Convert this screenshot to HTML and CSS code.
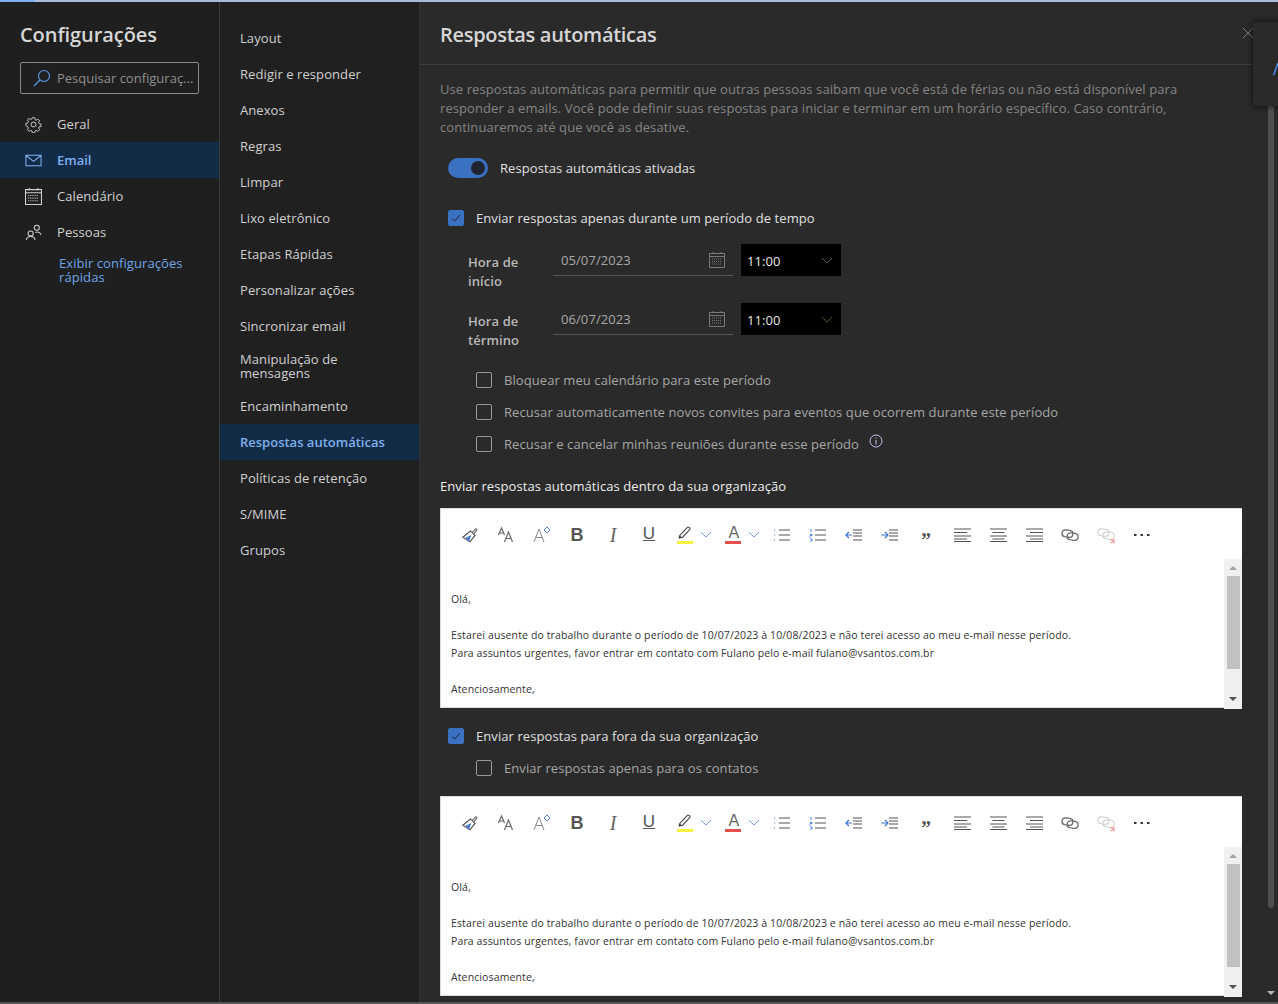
FILE: index.html
```html
<!DOCTYPE html>
<html lang="pt-BR">
<head>
<meta charset="utf-8">
<title>Configurações</title>
<link rel="stylesheet" href="styles.css">
</head>
<body>
<svg class="defs" width="0" height="0" aria-hidden="true">
  <defs>
    <symbol id="i-brush" viewBox="0 0 20 20"><path d="M12 8l4-4.500c.8-.9 2.200.4 1.400 1.300L13.500 9.500" fill="none" stroke="#666" stroke-width="1.200"/><path d="M10.500 5.500l5 5-5.500 7L2 12.500z" fill="#fff" stroke="#555" stroke-width="1.300"/><path d="M5 13l6.500-3-2 6-1.500 1z" fill="#4a7fd0"/></symbol>
    <symbol id="i-size" viewBox="0 0 18 18"><path d="M1.500 9L4.500 2l3 7M2.500 7h4M7.500 16l4-10 4 10M9 12.500h5" fill="none" stroke="#666" stroke-width="1.200"/></symbol>
    <symbol id="i-grow" viewBox="0 0 18 18"><path d="M1 16L6 3l5 13M2.800 11.500h6.400" fill="none" stroke="#888" stroke-width="1"/><path d="M14 1l3 3-3 3-3-3z" fill="none" stroke="#4a7fd0" stroke-width="1"/></symbol>
    <symbol id="i-hl" viewBox="0 0 18 18"><path d="M3 12L12 2.500c1-.9 3.500 1.200 2.500 2.300L6 14l-3.500.5z" fill="#fff" stroke="#444" stroke-width="1.200"/><path d="M2 15l1-3 3 2z" fill="#333"/></symbol>
    <symbol id="i-chev" viewBox="0 0 14 8"><path d="M1 1l6 6 6-6" fill="none" stroke="#5a8ad8" stroke-width="1"/></symbol>
    <symbol id="i-ul" viewBox="0 0 18 14"><path d="M6 2h11M6 7h11M6 12h11" stroke="#555" stroke-width="1.200"/><path d="M1 2h2M1 7h2M1 12h2" stroke="#4a7fd0" stroke-width="1.200" stroke-dasharray="1 1"/></symbol>
    <symbol id="i-ol" viewBox="0 0 18 14"><path d="M6 2h11M6 7h11M6 12h11" stroke="#555" stroke-width="1.200"/><path d="M2 1v3M1 6.500h2v1H1v2M1 11h2v2H1" fill="none" stroke="#5a8ad8" stroke-width="1"/></symbol>
    <symbol id="i-out" viewBox="0 0 18 14"><path d="M8 2h9M8 5h9M8 8h9M8 12h9" stroke="#555" stroke-width="1.100"/><path d="M1 7h6M4 4L1 7l3 3" fill="none" stroke="#3f74d0" stroke-width="1.200"/></symbol>
    <symbol id="i-in" viewBox="0 0 18 14"><path d="M8 2h9M8 5h9M8 8h9M8 12h9" stroke="#555" stroke-width="1.100"/><path d="M0 7h6M4 4l3 3-3 3" fill="none" stroke="#3f74d0" stroke-width="1.200"/></symbol>
    <symbol id="i-al" viewBox="0 0 18 14"><path d="M0 1h17M0 4.500h13M0 8h17M0 11h13M0 13.500h17" stroke="#555" stroke-width="1"/></symbol>
    <symbol id="i-ac" viewBox="0 0 18 14"><path d="M0 1h17M2.500 4.500h12M0 8h17M2.500 11h12M0 13.500h17" stroke="#555" stroke-width="1"/></symbol>
    <symbol id="i-ar" viewBox="0 0 18 14"><path d="M0 1h17M4 4.500h13M0 8h17M4 11h13M0 13.500h17" stroke="#555" stroke-width="1"/></symbol>
    <symbol id="i-link" viewBox="0 0 18 12"><rect x="1" y="1" width="11" height="7" rx="3.500" fill="none" stroke="currentColor" stroke-width="1.200" transform="rotate(8 6 4)"/><rect x="6" y="4" width="11" height="7" rx="3.500" fill="none" stroke="currentColor" stroke-width="1.200" transform="rotate(8 11 8)"/></symbol>
    <symbol id="i-more" viewBox="0 0 18 4"><path d="M1 1h2.500v2H1zM7.500 1H10v2H7.500zM14 1h2.500v2H14z" fill="#333"/></symbol>
    <symbol id="i-cal" viewBox="0 0 16 16"><path d="M.5 1.500h15v14H.5zM.5 4.500h15" fill="none" stroke="currentColor"/><path d="M4 0v2M12 0v2" stroke="currentColor"/><path d="M3 7h10M3 9.500h10M3 12h10" stroke="currentColor" stroke-dasharray="1 1"/></symbol>
    <symbol id="i-check" viewBox="0 0 16 16"><path d="M3.500 8.500l3 3 6-7" fill="none" stroke="currentColor" stroke-width="1.100"/></symbol>
  </defs>
</svg>
<div class="topbar"><div class="topbar-accent"></div></div>
<div class="app">
  <nav class="side">
    <h1 class="side-title">Configurações</h1>
    <div class="search">
      <svg class="search-icon" viewBox="0 0 18 18"><circle cx="11" cy="7" r="5.500" fill="none" stroke="currentColor" stroke-width="1.100"/><path d="M7 11l-6 6" stroke="currentColor" stroke-width="1.100"/></svg>
      <span>Pesquisar configuraç...</span>
    </div>
    <ul class="side-list">
      <li class="side-item"><svg class="side-icon" viewBox="0 0 18 18"><circle cx="9" cy="9" r="2.600" fill="none" stroke="currentColor"/><path d="M7.600 1h2.800l.4 2.200 1.500.7 1.900-1.200 2 2-1.200 1.900.7 1.500 2.200.4v2.800l-2.200.4-.7 1.500 1.200 1.900-2 2-1.900-1.200-1.500.7-.4 2.200H7.600l-.4-2.200-1.500-.7-1.900 1.200-2-2 1.200-1.900-.7-1.500L.1 10.400V7.600l2.200-.4.700-1.500L1.800 3.800l2-2 1.900 1.200 1.500-.7z" transform="translate(.9 .9) scale(.9)" fill="none" stroke="currentColor" stroke-width="1.100"/></svg>Geral</li>
      <li class="side-item side-item-active"><svg class="side-icon" viewBox="0 0 18 18"><path d="M1 3.500h16v11H1zM1.500 4L9 10l7.500-6" fill="none" stroke="currentColor" stroke-width="1.100"/></svg>Email</li>
      <li class="side-item"><svg class="side-icon" viewBox="0 0 16 16"><use href="#i-cal"/></svg>Calendário</li>
      <li class="side-item"><svg class="side-icon" viewBox="0 0 18 18"><circle cx="6" cy="10" r="2.700" fill="none" stroke="currentColor" stroke-width="1.100"/><path d="M1.500 17c0-5 9-5 9 0" fill="none" stroke="currentColor" stroke-width="1.100"/><circle cx="12.500" cy="4" r="2.700" fill="none" stroke="currentColor" stroke-width="1.100"/><path d="M11 9c2-1 5-.5 6 2.500" fill="none" stroke="currentColor" stroke-width="1.100"/></svg>Pessoas</li>
    </ul>
    <a class="quick-link">Exibir configurações rápidas</a>
  </nav>

  <nav class="sub">
    <div class="sub-item">Layout</div>
    <div class="sub-item">Redigir e responder</div>
    <div class="sub-item">Anexos</div>
    <div class="sub-item">Regras</div>
    <div class="sub-item">Limpar</div>
    <div class="sub-item">Lixo eletrônico</div>
    <div class="sub-item">Etapas Rápidas</div>
    <div class="sub-item">Personalizar ações</div>
    <div class="sub-item">Sincronizar email</div>
    <div class="sub-item sub-item-two">Manipulação de mensagens</div>
    <div class="sub-item">Encaminhamento</div>
    <div class="sub-item sub-item-active">Respostas automáticas</div>
    <div class="sub-item">Políticas de retenção</div>
    <div class="sub-item">S/MIME</div>
    <div class="sub-item">Grupos</div>
  </nav>

  <main class="main">
    <header class="main-head"><h2 class="main-title">Respostas automáticas</h2></header>
    <div class="content">
      <p class="intro">Use respostas automáticas para permitir que outras pessoas saibam que você está de férias ou não está disponível para responder a emails. Você pode definir suas respostas para iniciar e terminar em um horário específico. Caso contrário, continuaremos até que você as desative.</p>

      <div class="toggle-row">
        <span class="toggle"><span class="toggle-knob"></span></span>
        <span>Respostas automáticas ativadas</span>
      </div>

      <div class="check-row check-row-period">
        <span class="box box-on"><svg viewBox="0 0 16 16"><use href="#i-check"/></svg></span>
        <span>Enviar respostas apenas durante um período de tempo</span>
      </div>

      <div class="time-row time-row-first">
        <div class="time-label">Hora de início</div>
        <div class="date-field"><span>05/07/2023</span><svg class="cal" viewBox="0 0 16 16"><use href="#i-cal"/></svg></div>
        <div class="time-field"><span>11:00</span><svg class="time-chev" viewBox="0 0 14 8"><path d="M1 1l6 6 6-6" fill="none" stroke="currentColor"/></svg></div>
      </div>
      <div class="time-row">
        <div class="time-label">Hora de término</div>
        <div class="date-field"><span>06/07/2023</span><svg class="cal" viewBox="0 0 16 16"><use href="#i-cal"/></svg></div>
        <div class="time-field"><span>11:00</span><svg class="time-chev time-chev-warm" viewBox="0 0 14 8"><path d="M1 1l6 6 6-6" fill="none" stroke="currentColor"/></svg></div>
      </div>

      <div class="sub-checks">
        <div class="check-row"><span class="box"></span><span class="dim">Bloquear meu calendário para este período</span></div>
        <div class="check-row"><span class="box"></span><span class="dim">Recusar automaticamente novos convites para eventos que ocorrem durante este período</span></div>
        <div class="check-row"><span class="box"></span><span class="dim">Recusar e cancelar minhas reuniões durante esse período</span>
          <svg class="info" viewBox="0 0 14 14"><circle cx="7" cy="7" r="6" fill="none" stroke="currentColor"/><path d="M7 6v4.500M7 3.500v1.200" stroke="currentColor"/></svg>
        </div>
      </div>

      <div class="section-label">Enviar respostas automáticas dentro da sua organização</div>

      <section class="editor">
        <div class="toolbar">
          <svg class="t t-brush"><use href="#i-brush"/></svg>
          <svg class="t"><use href="#i-size"/></svg>
          <svg class="t t-grow"><use href="#i-grow"/></svg>
          <span class="t t-b">B</span>
          <span class="t t-i">I</span>
          <span class="t t-u">U</span>
          <span class="t t-color"><svg class="t-glyph"><use href="#i-hl"/></svg><span class="bar bar-yellow"></span></span>
          <svg class="t-chev"><use href="#i-chev"/></svg>
          <span class="t t-color t-color-a"><span class="t-a">A</span><span class="bar bar-red"></span></span>
          <svg class="t-chev"><use href="#i-chev"/></svg>
          <svg class="t t-l"><use href="#i-ul"/></svg>
          <svg class="t t-l"><use href="#i-ol"/></svg>
          <svg class="t t-l"><use href="#i-out"/></svg>
          <svg class="t t-l"><use href="#i-in"/></svg>
          <span class="t t-q">”</span>
          <svg class="t t-l"><use href="#i-al"/></svg>
          <svg class="t t-l"><use href="#i-ac"/></svg>
          <svg class="t t-l t-ar"><use href="#i-ar"/></svg>
          <svg class="t t-link"><use href="#i-link"/></svg>
          <span class="t t-unlink"><svg class="t-link t-link-off"><use href="#i-link"/></svg><span class="x">×</span></span>
          <svg class="t t-more"><use href="#i-more"/></svg>
        </div>
        <div class="body-wrap">
          <div class="body-text">
            <p>Olá,</p><p>&nbsp;</p>
            <p>Estarei ausente do trabalho durante o período de 10/07/2023 à 10/08/2023 e não terei acesso ao meu e-mail nesse período.</p>
            <p>Para assuntos urgentes, favor entrar em contato com Fulano pelo e-mail fulano@vsantos.com.br</p>
            <p>&nbsp;</p><p>Atenciosamente,</p>
          </div>
          <div class="scroll"><span class="arrow-up"></span><span class="thumb thumb-short"></span><span class="arrow-down"></span></div>
        </div>
      </section>

      <div class="check-row check-row-out">
        <span class="box box-on"><svg viewBox="0 0 16 16"><use href="#i-check"/></svg></span>
        <span>Enviar respostas para fora da sua organização</span>
      </div>
      <div class="sub-checks sub-checks-out">
        <div class="check-row"><span class="box"></span><span class="dim">Enviar respostas apenas para os contatos</span></div>
      </div>

      <section class="editor">
        <div class="toolbar">
          <svg class="t t-brush"><use href="#i-brush"/></svg>
          <svg class="t"><use href="#i-size"/></svg>
          <svg class="t t-grow"><use href="#i-grow"/></svg>
          <span class="t t-b">B</span>
          <span class="t t-i">I</span>
          <span class="t t-u">U</span>
          <span class="t t-color"><svg class="t-glyph"><use href="#i-hl"/></svg><span class="bar bar-yellow"></span></span>
          <svg class="t-chev"><use href="#i-chev"/></svg>
          <span class="t t-color t-color-a"><span class="t-a">A</span><span class="bar bar-red"></span></span>
          <svg class="t-chev"><use href="#i-chev"/></svg>
          <svg class="t t-l"><use href="#i-ul"/></svg>
          <svg class="t t-l"><use href="#i-ol"/></svg>
          <svg class="t t-l"><use href="#i-out"/></svg>
          <svg class="t t-l"><use href="#i-in"/></svg>
          <span class="t t-q">”</span>
          <svg class="t t-l"><use href="#i-al"/></svg>
          <svg class="t t-l"><use href="#i-ac"/></svg>
          <svg class="t t-l t-ar"><use href="#i-ar"/></svg>
          <svg class="t t-link"><use href="#i-link"/></svg>
          <span class="t t-unlink"><svg class="t-link t-link-off"><use href="#i-link"/></svg><span class="x">×</span></span>
          <svg class="t t-more"><use href="#i-more"/></svg>
        </div>
        <div class="body-wrap">
          <div class="body-text">
            <p>Olá,</p><p>&nbsp;</p>
            <p>Estarei ausente do trabalho durante o período de 10/07/2023 à 10/08/2023 e não terei acesso ao meu e-mail nesse período.</p>
            <p>Para assuntos urgentes, favor entrar em contato com Fulano pelo e-mail fulano@vsantos.com.br</p>
            <p>&nbsp;</p><p>Atenciosamente,</p>
          </div>
          <div class="scroll"><span class="arrow-up"></span><span class="thumb"></span><span class="arrow-down"></span></div>
        </div>
      </section>
    </div>
    <div class="page-scroll"><span class="page-thumb"></span><span class="page-arrow"></span></div>
  </main>
</div>
<svg class="close" viewBox="0 0 14 14"><path d="M1 1l12 12M13 1L1 13" stroke="currentColor"/></svg>
<div class="float-card"><svg class="float-icon" viewBox="0 0 12 16"><path d="M6 1L1 15M6 1l5 14" fill="none" stroke="currentColor" stroke-width="1.800"/></svg></div>
</body>
</html>
```
FILE: styles.css
```css
* { box-sizing: border-box; }
html, body { margin: 0; height: 100%; overflow: hidden; }
body { background: #202020; color: #e6e6e6; font-family: "Open Sans", "Noto Sans", sans-serif; font-size: 13px; letter-spacing: .08px; position: relative; }
.defs { position: absolute; }
.topbar { height: 2px; background: #a9bcd9; }
.topbar-accent { width: 35px; height: 2px; background: #7fb0ee; }
.app { display: flex; height: 1002px; border-bottom: 2px solid #555; }

.side { width: 220px; flex: none; border-right: 1px solid #3a3a3a; background: #1f1f1f; }
.side-title { margin: 18px 0 0 20px; font-size: 20px; line-height: 30px; font-weight: 600; color: #d6d6d6; letter-spacing: -.07px; }
.search { margin: 12px 0 0 20px; width: 179px; height: 32px; border: 1px solid #8a8a8a; border-radius: 2px; display: flex; align-items: center; gap: 6px; padding-left: 12px; color: #8f8f8f; white-space: nowrap; overflow: hidden; letter-spacing: 0; }
.search-icon { width: 18px; height: 18px; color: #5e9de8; flex: none; }
.side-list { list-style: none; margin: 12px 0 0; padding: 0; }
.side-item { height: 36px; display: flex; align-items: center; padding-left: 25px; gap: 15px; color: #d0d0d0; }
.side-item-active { background: #122c48; color: #7fb0ee; font-weight: 600; letter-spacing: 0; }
.side-icon { width: 17px; height: 17px; flex: none; }
.quick-link { display: block; margin: 6px 20px 0 59px; color: #6ea6e6; line-height: 14px; }

.sub { width: 200px; flex: none; padding-top: 18px; border-right: 1px solid #333; background: #202020; }
.sub-item { min-height: 36px; display: flex; align-items: center; padding: 0 20px; color: #d0d0d0; line-height: 14px; }
.sub-item-two { min-height: 44px; }
.sub-item-active { background: #122c48; color: #7fb0ee; font-weight: 600; letter-spacing: 0; }

.main { flex: 1; min-width: 0; background: #2a2a2a; position: relative; }
.main-head { height: 63px; padding: 18px 20px 0; border-bottom: 1px solid #3d3d3d; }
.main-title { margin: 0; font-size: 20px; line-height: 30px; font-weight: 600; color: #d6d6d6; letter-spacing: -.3px; }
.content { padding: 0 36px 0 20px; }
.intro { margin: 15px 0 0; line-height: 19px; color: #858585; width: 760px; }
.toggle-row { display: flex; align-items: center; gap: 12px; margin: 20px 0 0 8px; height: 22px; color: #e0e0e0; }
.toggle { width: 40px; height: 20px; border-radius: 10px; background: #3a71c1; display: flex; justify-content: flex-end; align-items: center; padding-right: 3px; }
.toggle-knob { width: 14px; height: 14px; border-radius: 50%; background: #1f2430; }
.check-row { display: flex; align-items: center; gap: 12px; height: 32px; color: #e0e0e0; }
.check-row-period { margin: 23px 0 0 8px; }
.box { width: 16px; height: 16px; flex: none; border: 1px solid #9a9a9a; border-radius: 2px; color: #1a2130; display: block; }
.box svg { display: block; width: 100%; height: 100%; }
.box-on { background: #3a71c1; border-color: #3a71c1; }
.dim { color: #a6a6a6; }
.time-row { display: flex; align-items: flex-start; margin: 0 0 0 28px; height: 59px; }
.time-row-first { margin-top: 10px; }
.time-label { width: 85px; padding-top: 9px; line-height: 19px; font-weight: 600; color: #b8b8b8; }
.date-field { width: 180px; height: 32px; border-bottom: 1px solid #555; display: flex; align-items: center; justify-content: space-between; padding: 0 8px; color: #a8a8a8; }
.cal { width: 16px; height: 16px; color: #7a7a7a; }
.time-field { width: 100px; height: 32px; margin-left: 8px; background: #000; display: flex; align-items: center; justify-content: space-between; padding: 1px 8px 0 6px; color: #e8e8e8; }
.time-chev { width: 12px; height: 7px; color: #6d6d6d; }
.time-chev-warm { color: #6f5c3d; }
.sub-checks { margin: 2px 0 0 36px; }
.sub-checks-out { margin-top: 0; }
.info { width: 14px; height: 14px; color: #c8c0ee; margin: -6px 0 0 -2px; }
.section-label { margin-top: 16px; line-height: 20px; color: #eee; }
.editor { margin-top: 12px; width: 802px; height: 200px; background: #fff; border: 1px solid #dcdcdc; border-width: 1px 0 1px 1px; display: flex; flex-direction: column; }
.toolbar { height: 50px; flex: none; display: flex; align-items: center; padding: 1px 0 0 20px; color: #555; }
.t { width: 18px; height: 18px; margin-right: 18px; flex: none; display: block; text-align: center; }
.t-brush { width: 18px; height: 18px; }
.t-grow { margin-right: 17px; }
.t-b { font-weight: 700; font-size: 18px; line-height: 18px; font-family: "Liberation Sans", sans-serif; color: #555; }
.t-i { font-style: italic; font-size: 20px; line-height: 18px; font-family: "Liberation Serif", serif; color: #666; }
.t-u { font-size: 17px; line-height: 16px; font-family: "Liberation Sans", sans-serif; text-decoration: underline; color: #555; margin-right: 19px; }
.t-color { position: relative; margin-right: 5px; height: 20px; }
.t-color-a { margin-right: 5px; }
.t-glyph { width: 16px; height: 16px; display: block; }
.t-a { display: block; font-size: 16px; line-height: 15px; font-family: "Liberation Sans", sans-serif; color: #666; }
.bar { position: absolute; left: 0; bottom: 1px; width: 16px; height: 3px; }
.bar-yellow { background: #f4f43a; }
.bar-red { background: #e8504f; }
.t-chev { width: 12px; height: 7px; margin-right: 13px; flex: none; }
.t-l { height: 14px; }
.t-ar { margin-right: 17px; }
.t-q { font: 700 20px/18px "Liberation Serif", serif; color: #555; padding-top: 5px; margin-right: 19px; }
.t-link { color: #666; height: 12px; }
.t-unlink { position: relative; height: 14px; }
.t-link-off { display: block; width: 18px; height: 12px; color: #d4d4d4; }
.x { position: absolute; right: -1px; bottom: -3px; color: #f09a9a; font-size: 11px; line-height: 8px; font-weight: 700; }
.t-more { height: 4px; }
.body-wrap { flex: 1; min-height: 0; display: flex; }
.body-text { flex: 1; min-width: 0; padding: 31px 0 0 10px; color: #333; font-size: 10.500px; letter-spacing: .12px; line-height: 18px; overflow: hidden; }
.body-text p { margin: 0; white-space: nowrap; }
.scroll { width: 18px; height: 150px; background: #f0f0f0; display: flex; flex-direction: column; align-items: center; padding: 6px 0 0; }
.arrow-up { width: 0; height: 0; border: 4px solid transparent; border-top: 0; border-bottom: 4px solid #a3a3a3; margin: 1px 0 6px; }
.thumb { width: 13px; height: 103px; background: #c1c1c1; }
.thumb-short { height: 93px; }
.arrow-down { width: 0; height: 0; border: 4px solid transparent; border-bottom: 0; border-top: 4px solid #505050; margin-top: auto; margin-bottom: 8px; }
.check-row-out { margin: 12px 0 0 8px; }
.page-scroll { position: absolute; right: 4px; top: 104px; width: 6px; height: 896px; }
.page-thumb { display: block; width: 6px; height: 802px; background: #4f4f4f; border-radius: 0 0 3px 3px; }
.page-arrow { display: block; position: absolute; top: 885px; left: -1px; width: 0; height: 0; border: 4px solid transparent; border-bottom: 0; border-top: 4px solid #b0b8c0; }
.close { position: absolute; left: 1242px; top: 27px; width: 12px; height: 12px; color: #8a8a8a; }
.float-card { position: absolute; left: 1253px; top: 22px; width: 30px; height: 84px; background: #2a2a2a; border-radius: 2px; box-shadow: 0 0 6px rgba(0,0,0,.75); display: flex; align-items: center; padding-left: 19px; }
.float-icon { width: 12px; height: 14px; color: #4a86dc; margin-top: 10px; flex: none; }
```
